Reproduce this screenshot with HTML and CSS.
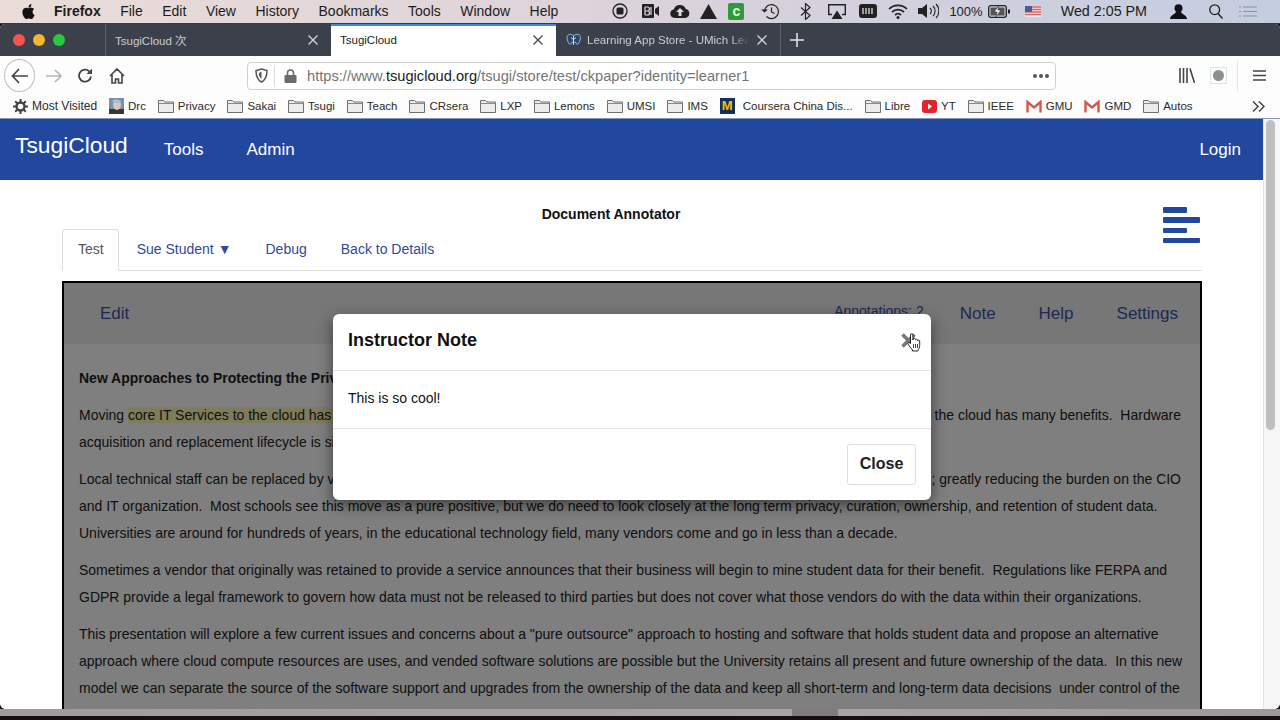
FILE: index.html
```html
<!DOCTYPE html>
<html lang="en">
<head>
<meta charset="utf-8">
<title>TsugiCloud</title>
<link rel="stylesheet" href="styles.css">
</head>
<body>
<svg class="defs" width="0" height="0" aria-hidden="true">
  <symbol id="folder" viewBox="0 0 16 14">
    <path d="M.5 13.5V1.5h5l1.5 1.5h8.500v10.500z" fill="#ececec" stroke="#6f6f6f"/>
    <path d="M.5 4.500h15" stroke="#8a8a8a"/>
  </symbol>
  <symbol id="gmail" viewBox="0 0 16 13">
    <path d="M1.500 12.500V2l6.500 5.500L14.500 2v10.500" fill="none" stroke="#d4574a" stroke-width="2.400"/>
  </symbol>
  <symbol id="tabclose" viewBox="0 0 12 12">
    <path d="M1.500 1.500l9 9m0-9l-9 9" fill="none" stroke="currentColor" stroke-width="1.300"/>
  </symbol>
</svg>

<header class="menubar">
  <svg class="apple" width="15" height="17" viewBox="0 0 24 24"><path d="M12.152 6.896c-.948 0-2.415-1.078-3.96-1.04-2.04.027-3.91 1.183-4.961 3.014-2.117 3.675-.546 9.103 1.519 12.09 1.013 1.454 2.208 3.09 3.792 3.039 1.52-.065 2.09-.987 3.935-.987 1.831 0 2.35.987 3.96.948 1.637-.026 2.676-1.48 3.676-2.948 1.156-1.688 1.636-3.325 1.662-3.415-.039-.013-3.182-1.221-3.22-4.857-.026-3.04 2.48-4.494 2.597-4.559-1.429-2.09-3.623-2.324-4.39-2.376-2-.156-3.675 1.09-4.61 1.09zM15.53 3.83c.843-1.012 1.4-2.427 1.245-3.83-1.207.052-2.662.805-3.532 1.818-.78.896-1.454 2.338-1.273 3.714 1.338.104 2.715-.688 3.559-1.701"/></svg>
  <nav class="menus">
    <span class="menu-app">Firefox</span>
    <span>File</span><span>Edit</span><span>View</span><span>History</span><span>Bookmarks</span><span>Tools</span><span>Window</span><span>Help</span>
  </nav>
  <div class="status">
    <svg class="st st-rec" width="16" height="16" viewBox="0 0 16 16"><circle cx="8" cy="8" r="7" fill="none" stroke="#222" stroke-width="1.300"/><rect x="4.500" y="4.500" width="7" height="7" rx="1.500" fill="#222"/></svg>
    <svg class="st st-bi" width="17" height="14" viewBox="0 0 17 14"><rect width="12" height="14" rx="1" fill="#222"/><path d="M3 3v8M3 3h2.500a2 2 0 0 1 0 4H3m2.500 0a2 2 0 0 1 0 4H3M9 3v8" fill="none" stroke="#ddd" stroke-width="1.200"/><path d="M13 5l4-3v10l-4-3z" fill="#222"/></svg>
    <svg class="st st-cloud" width="20" height="14" viewBox="0 0 20 14"><path d="M4.500 14a4.300 4.300 0 0 1-.8-8.500A6.400 6.400 0 0 1 15.800 5 4.600 4.600 0 0 1 15.500 14z" fill="#222"/><path d="M10 4l4 4h-2.500v4h-3V8H6z" fill="#e0d8e0"/></svg>
    <svg class="st st-tri" width="17" height="15" viewBox="0 0 17 15"><path d="M8.500 0L17 15H0z" fill="#222"/></svg>
    <span class="st st-c">c</span>
    <svg class="st st-clock" width="19" height="17" viewBox="0 0 19 17"><path d="M3.500 8.500a7 7 0 1 1 2 5" fill="none" stroke="#222" stroke-width="1.200"/><path d="M0 6.500l3.500 3 3.500-3z" fill="#222"/><path d="M10.500 4.500v4.500l3 1.500" fill="none" stroke="#222" stroke-width="1.200"/></svg>
    <svg class="st st-bt" width="11" height="17" viewBox="0 0 11 17"><path d="M1 4.500l9 8-4.500 4V.5l4.500 4-9 8" fill="none" stroke="#222" stroke-width="1.200"/></svg>
    <svg class="st st-air" width="18" height="15" viewBox="0 0 18 15"><path d="M4 10.500H.7V.7h16.600v9.800H14" fill="none" stroke="#222" stroke-width="1.400"/><path d="M9 6.500l5.500 8.500h-11z" fill="#222"/></svg>
    <svg class="st st-mem" width="18" height="14" viewBox="0 0 18 14"><rect width="18" height="14" rx="3" fill="#222"/><path d="M4 4v6M7 4v6M10 4v6M13 4v6" stroke="#ddd" stroke-width="1.300"/></svg>
    <svg class="st st-wifi" width="20" height="15" viewBox="0 0 20 15"><path d="M1 5a13 13 0 0 1 18 0M4 8a9 9 0 0 1 12 0M7 11a4.500 4.500 0 0 1 6 0" fill="none" stroke="#222" stroke-width="1.700"/><circle cx="10" cy="13.500" r="1.500" fill="#222"/></svg>
    <svg class="st st-vol" width="21" height="16" viewBox="0 0 21 16"><path d="M0 5h4l5-4v14l-5-4H0z" fill="#222"/><path d="M12 5a4 4 0 0 1 0 6M15 3a7 7 0 0 1 0 10M18 1a10 10 0 0 1 0 14" fill="none" stroke="#222" stroke-width="1.100"/></svg>
    <span class="st-pct">100%</span>
    <svg class="st st-batt" width="22" height="13" viewBox="0 0 22 13"><rect x=".7" y=".7" width="17.600" height="11.600" rx="2" fill="none" stroke="#222" stroke-width="1.300"/><rect x="2.500" y="2.500" width="14" height="8" fill="#555"/><path d="M20 4.500h2v4h-2z" fill="#222"/><path d="M10.500 1L6 7h3l-1 5 5-7h-3z" fill="#eee" stroke="#222" stroke-width=".5"/></svg>
    <svg class="st st-flag" width="16" height="11" viewBox="0 0 16 11"><rect width="16" height="11" fill="#e8e8ee"/><path d="M0 1h16M0 3.500h16M0 6h16M0 8.500h16" stroke="#d96a6a" stroke-width="1.300"/><rect width="7" height="6" fill="#4a5a9a"/></svg>
    <span class="st-clocktext">Wed 2:05 PM</span>
    <svg class="st st-user" width="17" height="15" viewBox="0 0 17 15"><circle cx="8.500" cy="4.200" r="4" fill="#111"/><path d="M6 7.500c0 2.500-6 3.500-6 7.500h17c0-4-6-5-6-7.500z" fill="#111"/></svg>
    <svg class="st st-search" width="14" height="15" viewBox="0 0 14 15"><circle cx="5.700" cy="5.700" r="4.900" fill="none" stroke="#222" stroke-width="1.300"/><path d="M9 9.500l4.500 5" stroke="#222" stroke-width="1.500"/></svg>
    <svg class="st st-list" width="18" height="11" viewBox="0 0 18 11"><path d="M0 1h2M4 1h14M0 5.500h2M4 5.500h14M0 10h2M4 10h14" stroke="#8d8f98" stroke-width="1.200"/></svg>
  </div>
</header>

<div class="window">
  <div class="tabstrip">
    <div class="traffic"><i class="dot dot-r"></i><i class="dot dot-y"></i><i class="dot dot-g"></i></div>
    <div class="tab">
      <span class="tab-title">TsugiCloud 次</span>
      <svg class="tab-x" width="12" height="12"><use href="#tabclose"/></svg>
    </div>
    <div class="tab tab-active">
      <span class="tab-title">TsugiCloud</span>
      <svg class="tab-x" width="12" height="12"><use href="#tabclose"/></svg>
    </div>
    <div class="tab tab-third">
      <svg class="tab-icon" width="15" height="15" viewBox="0 0 15 15"><path d="M7.500 2.500C5 .5 1 1 1 4.500c0 2 1 5 2.500 6.500 1 1 2-.5 2.500-2 1 .5 2.500.5 3.500 0 .5 1.500 1.500 3 2.500 2 1.500-1.500 2.500-4.500 2.500-6.500 0-3.500-4-4-6.500-2z" fill="#27486e" stroke="#9db8d8"/><path d="M7.500 3v9M5 4.500l2.500 2 2.500-2" fill="none" stroke="#dfe8f2" stroke-width=".9"/></svg>
      <span class="tab-title tab-fade">Learning App Store - UMich Lea</span>
      <svg class="tab-x" width="12" height="12"><use href="#tabclose"/></svg>
    </div>
    <svg class="newtab" width="14" height="14" viewBox="0 0 14 14"><path d="M7 0v14M0 7h14" stroke="#e4e6ea" stroke-width="1.500"/></svg>
  </div>

  <div class="toolbar">
    <span class="backbtn">
      <svg width="18" height="16" viewBox="0 0 18 16"><path d="M8 1L1.500 8 8 15M2 8h15" fill="none" stroke="#444" stroke-width="1.700"/></svg>
    </span>
    <svg class="tb-fwd" width="17" height="14" viewBox="0 0 17 14"><path d="M10 1l6 6-6 6M16 7H1" fill="none" stroke="#b5b5b8" stroke-width="1.600"/></svg>
    <svg class="tb-reload" width="16" height="15" viewBox="0 0 16 15"><path d="M14 8.500a6 6 0 1 1-1.800-5.200" fill="none" stroke="#444" stroke-width="1.800"/><path d="M15 .5v5.500H9.500z" fill="#444"/></svg>
    <svg class="tb-home" width="16" height="16" viewBox="0 0 16 16"><path d="M1 8l7-7 7 7M3 6.500V15h3.500v-4h3v4H13V6.500" fill="none" stroke="#444" stroke-width="1.600"/></svg>
    <div class="urlbar">
      <svg class="url-shield" width="13" height="15" viewBox="0 0 13 15"><path d="M6.500 1L12 2.500c0 6-1.500 9.500-5.500 11.500C2.500 12 1 8.500 1 2.500z" fill="none" stroke="#555" stroke-width="1.500"/><path d="M6.500 3.500v7.500C4.500 9.500 4 8 3.800 5z" fill="#555"/></svg>
      <i class="url-sep"></i>
      <svg class="url-lock" width="13" height="14" viewBox="0 0 13 14"><path d="M3.500 6V4a3 3 0 0 1 6 0v2" fill="none" stroke="#6b6b6b" stroke-width="1.600"/><rect x=".5" y="6" width="12" height="8" rx="1.300" fill="#6b6b6b"/></svg>
      <span class="url-text">https://www.<b>tsugicloud.org</b>/tsugi/store/test/ckpaper?identity=learner1</span>
      <span class="url-more"><i></i><i></i><i></i></span>
    </div>
    <svg class="tb-lib" width="16" height="15" viewBox="0 0 16 15"><path d="M1 0v15M4.500 0v15M8 0v15M11 .5l4.500 14.500" fill="none" stroke="#444" stroke-width="1.600"/></svg>
    <span class="tb-ext"><i></i></span>
    <i class="tb-sep"></i>
    <svg class="tb-menu" width="13" height="11" viewBox="0 0 13 11"><path d="M0 1h13M0 5.500h13M0 10h13" stroke="#444" stroke-width="1.600"/></svg>
  </div>

  <div class="bookmarks">
    <span class="bm bm-first"><svg width="15" height="15" viewBox="0 0 15 15"><circle cx="7.500" cy="7.500" r="4" fill="none" stroke="#444" stroke-width="2.400"/><path d="M7.500 0v3M7.500 12v3M0 7.500h3M12 7.500h3M2.200 2.200l2 2M10.800 10.800l2 2M12.800 2.200l-2 2M4.200 10.800l-2 2" stroke="#444" stroke-width="2"/></svg>Most Visited</span>
    <span class="bm"><svg width="15" height="16" viewBox="0 0 15 16"><rect width="15" height="16" fill="#7c8fa8"/><rect y="11" width="15" height="5" fill="#3a3434"/><ellipse cx="8" cy="7" rx="4" ry="5" fill="#d7c7b8"/><path d="M3 3l4-2 5 2-2 2H5z" fill="#a9bfd6"/></svg>Drc</span>
    <span class="bm"><svg width="16" height="14"><use href="#folder"/></svg>Privacy</span>
    <span class="bm"><svg width="16" height="14"><use href="#folder"/></svg>Sakai</span>
    <span class="bm"><svg width="16" height="14"><use href="#folder"/></svg>Tsugi</span>
    <span class="bm"><svg width="16" height="14"><use href="#folder"/></svg>Teach</span>
    <span class="bm"><svg width="16" height="14"><use href="#folder"/></svg>CRsera</span>
    <span class="bm"><svg width="16" height="14"><use href="#folder"/></svg>LXP</span>
    <span class="bm"><svg width="16" height="14"><use href="#folder"/></svg>Lemons</span>
    <span class="bm"><svg width="16" height="14"><use href="#folder"/></svg>UMSI</span>
    <span class="bm"><svg width="16" height="14"><use href="#folder"/></svg>IMS</span>
    <span class="bm bm-wide"><span class="um-logo">M</span>Coursera China Dis...</span>
    <span class="bm"><svg width="16" height="14"><use href="#folder"/></svg>Libre</span>
    <span class="bm"><svg width="15" height="13" viewBox="0 0 15 13"><rect width="15" height="13" rx="3" fill="#e8202a"/><path d="M6 3.500l4 3-4 3z" fill="#fff"/></svg>YT</span>
    <span class="bm"><svg width="16" height="14"><use href="#folder"/></svg>IEEE</span>
    <span class="bm"><svg width="16" height="13"><use href="#gmail"/></svg>GMU</span>
    <span class="bm"><svg width="16" height="13"><use href="#gmail"/></svg>GMD</span>
    <span class="bm"><svg width="16" height="14"><use href="#folder"/></svg>Autos</span>
    <svg class="bm-more" width="13" height="11" viewBox="0 0 13 11"><path d="M1 .5l5 5-5 5M7 .5l5 5-5 5" fill="none" stroke="#444" stroke-width="1.500"/></svg>
  </div>

  <div class="viewport">
    <main class="page">
      <nav class="navbar">
        <a class="brand">TsugiCloud</a>
        <a class="nav-link">Tools</a>
        <a class="nav-link">Admin</a>
        <a class="nav-link nav-login">Login</a>
      </nav>
      <div class="container">
        <div class="title-row">
          <div class="doc-title">Document Annotator</div>
          <div class="hamburger"><i class="bar-s"></i><i class="bar-l"></i><i class="bar-s"></i><i class="bar-l"></i></div>
        </div>
        <ul class="tabs">
          <li class="tab-on">Test</li>
          <li>Sue Student ▼</li>
          <li>Debug</li>
          <li>Back to Details</li>
        </ul>
        <section class="frame">
          <div class="frame-bar">
            <a class="fb-link">Edit</a>
            <span class="fb-count">Annotations: 2</span>
            <a class="fb-link fb-note">Note</a>
            <a class="fb-link">Help</a>
            <a class="fb-link">Settings</a>
          </div>
          <article class="doc">
            <p class="doc-head">New Approaches to Protecting the Privacy</p>
            <p>
              <span class="line line-split"><span>Moving <mark>core IT Services to the cloud has many</mark></span><span>the cloud has many benefits.  Hardware</span></span>
              <span class="line">acquisition and replacement lifecycle is simplified</span>
            </p>
            <p>
              <span class="line line-split"><span>Local technical staff can be replaced by vendors</span><span>; greatly reducing the burden on the CIO</span></span>
              <span class="line">and IT organization.  Most schools see this move as a pure positive, but we do need to look closely at the long term privacy, curation, ownership, and retention of student data.</span>
              <span class="line">Universities are around for hundreds of years, in the educational technology field, many vendors come and go in less than a decade.</span>
            </p>
            <p>
              <span class="line">Sometimes a vendor that originally was retained to provide a service announces that their business will begin to mine student data for their benefit.  Regulations like FERPA and</span>
              <span class="line">GDPR provide a legal framework to govern how data must not be released to third parties but does not cover what those vendors do with the data within their organizations.</span>
            </p>
            <p>
              <span class="line">This presentation will explore a few current issues and concerns about a "pure outsource" approach to hosting and software that holds student data and propose an alternative</span>
              <span class="line">approach where cloud compute resources are uses, and vended software solutions are possible but the University retains all present and future ownership of the data.  In this new</span>
              <span class="line">model we can separate the source of the software support and upgrades from the ownership of the data and keep all short-term and long-term data decisions  under control of the</span>
            </p>
          </article>
          <div class="backdrop"></div>
          <div class="modal">
            <div class="modal-head">
              <h2>Instructor Note</h2>
              <svg class="modal-x" width="15" height="15" viewBox="0 0 15 15"><path d="M1.500 1.500l12 12m0-12l-12 12" stroke="#777" stroke-width="3.600"/></svg>
              <svg class="cursor" width="14" height="19" viewBox="0 0 14 19"><path d="M3.500 10.500V2a1.200 1.200 0 0 1 2.400 0v5l.3-1a1.200 1.200 0 0 1 2.200.2l.2.600a1.100 1.100 0 0 1 2 .3l.2.500a1 1 0 0 1 1.900.4v4.500c0 2-1 3.500-1.800 4.700v.8H5.500v-1C4 15.500 2.500 13 1 11.200c-.9-1.200.9-2.400 2.500-.7z" fill="#fff" stroke="#111" stroke-width=".9"/><path d="M6.500 11v4M8.500 11v4M10.500 11v4" stroke="#111" stroke-width=".8"/></svg>
            </div>
            <div class="modal-body">This is so cool!</div>
            <div class="modal-foot"><button class="btn-close">Close</button></div>
          </div>
        </section>
      </div>
    </main>
    <aside class="scrollbar"><i class="thumb"></i></aside>
  </div>
</div>
<div class="dock-strip"></div>
</body>
</html>
```

FILE: styles.css
```css
* { box-sizing: border-box; }
html, body { margin: 0; height: 720px; overflow: hidden; }
body {
  background: #17100f;
  font-family: "Liberation Sans", "Noto Sans CJK SC", sans-serif;
  color: #222;
}
i { display: block; }
.defs { position: absolute; }

/* macOS menu bar */
.menubar {
  height: 24px;
  display: flex;
  align-items: center;
  padding-bottom: 1px;
  background: linear-gradient(90deg, #eadcd7 0%, #ddd3da 45%, #c4cde0 100%);
  border-bottom: 1px solid #3a3a3e;
  font-size: 14px;
  color: #1c1c1c;
}
.apple { margin-left: 21px; fill: #111; }
.menus { display: flex; gap: 19.500px; margin-left: 18px; }
.menu-app { font-weight: bold; }
.status { display: flex; align-items: center; margin-left: auto; padding-right: 23px; }
.st { display: block; flex: none; }
.st-bi { margin-left: 14px; }
.st-cloud { margin-left: 11px; }
.st-tri { margin-left: 10px; }
.st-c {
  margin-left: 11px; width: 16px; height: 17px; border-radius: 2px;
  background: #2f9a3c; color: #e8f3d8; font-size: 14px; font-weight: bold;
  text-align: center; line-height: 17px;
}
.st-clock { margin-left: 17px; }
.st-bt { margin-left: 20px; }
.st-air { margin-left: 17px; }
.st-mem { margin-left: 13px; }
.st-wifi { margin-left: 11px; }
.st-vol { margin-left: 10px; }
.st-pct { margin-left: 10px; font-size: 13px; }
.st-batt { margin-left: 5px; }
.st-flag { margin-left: 15px; }
.st-clocktext { margin-left: 20px; font-size: 14.300px; }
.st-user { margin-left: 23px; }
.st-search { margin-left: 22px; }
.st-list { margin-left: 16px; }

/* browser window */
.window {
  height: 685px;
  display: flex;
  flex-direction: column;
  overflow: hidden;
  border-radius: 5px 5px 6px 6px;
  position: relative;
  background: #fff;
}
.tabstrip {
  height: 32px;
  flex: none;
  display: flex;
  align-items: stretch;
  background: #3b404b;
  color: #c9cdd3;
  font-size: 11.500px;
}
.traffic { width: 106px; display: flex; align-items: center; gap: 8px; padding-left: 13px; border-right: 1px solid #5a5f69; }
.dot { width: 12px; height: 12px; border-radius: 50%; }
.dot-r { background: #f5544d; }
.dot-y { background: #f5b52e; }
.dot-g { background: #28c840; }
.tab { width: 225px; display: flex; align-items: center; padding: 0 12px 0 9px; }
.tab-title { flex: 1; min-width: 0; white-space: nowrap; overflow: hidden; }
.tab-x { flex: none; margin-left: 6px; color: #d3d6da; }
.tab-active { background: #fff; color: #222; border-top: 2px solid #3b8ad9; padding-bottom: 2px; }
.tab-active .tab-x { color: #444; }
.tab-third { border-right: 1px solid #5a5f69; padding-left: 10px; }
.tab-icon { flex: none; margin-right: 6px; }
.tab-fade { -webkit-mask-image: linear-gradient(90deg, #000 88%, transparent); mask-image: linear-gradient(90deg, #000 88%, transparent); }
.newtab { align-self: center; margin-left: 9px; }

.toolbar {
  height: 39px;
  flex: none;
  display: flex;
  align-items: center;
  background: #fdfdfd;
}
.backbtn {
  width: 31px; height: 33px; margin-left: 4px; border-radius: 50%;
  border: 1px solid #bdbdbd; background: #fff;
  display: flex; align-items: center; justify-content: center;
}
.tb-fwd { margin-left: 10px; }
.tb-reload { margin-left: 15px; }
.tb-home { margin-left: 16px; }
.urlbar {
  width: 809px; height: 28px; margin-left: 122px;
  border: 1px solid #cfcfcf; border-radius: 4px; background: #fff;
  display: flex; align-items: center; font-size: 14.650px; color: #757575;
}
.url-shield { margin-left: 7px; }
.url-sep { width: 1px; height: 22px; background: #dedede; margin-left: 6px; }
.url-lock { margin-left: 9px; }
.url-text { margin-left: 10px; white-space: nowrap; flex: 1; }
.url-text b { font-weight: normal; color: #1a1a1a; }
.url-more { display: flex; gap: 2px; margin-right: 6px; }
.url-more i { width: 4px; height: 4px; border-radius: 50%; background: #555; }
.tb-lib { margin-left: 123px; }
.tb-ext { width: 17px; height: 17px; margin-left: 15px; border: 1px solid #d3e8e3; display: flex; align-items: center; justify-content: center; }
.tb-ext i { width: 11px; height: 11px; border-radius: 50%; background: #8f8f8f; }
.tb-sep { width: 1px; height: 30px; background: #e6e6e6; margin-left: 10px; }
.tb-menu { margin-left: 15px; }

.bookmarks {
  height: 24px;
  flex: none;
  display: flex;
  align-items: center;
  gap: 11.900px;
  padding: 0 0 1px 13px;
  background: #fdfdfd;
  font-size: 11.500px;
  color: #2a2a2a;
  border-bottom: 1px solid #8796b5;
}
.bm { display: flex; align-items: center; gap: 4px; white-space: nowrap; flex: none; }
.bm svg { flex: none; display: block; }
.bm-first { font-size: 12px; }
.bm-wide { gap: 8px; }
.um-logo {
  width: 15px; height: 16px; background: #14305e; color: #f3c200;
  font-size: 13px; font-weight: bold; text-align: center; line-height: 16px;
}
.bm-more { margin-left: auto; margin-right: 15px; }

/* page */
.viewport { flex: 1; min-height: 0; display: flex; }
.page { width: 1263px; flex: none; overflow: hidden; background: #fff; }
.scrollbar { flex: 1; background: #f6f6f6; border-left: 1px solid #e4e4e4; padding: 1px 5px 0 2px; }
.thumb { height: 310px; border-radius: 5px; background: #bfbfbf; }

.navbar {
  height: 61px;
  background: #22479f;
  display: flex;
  align-items: center;
  padding: 0 22px 0 15px;
  color: #fff;
}
.brand { font-size: 22.800px; margin-right: 36px; padding-bottom: 9px; }
.nav-link { font-size: 17px; margin-right: 43px; }
.nav-login { margin-left: auto; margin-right: 0; }

.container { margin: 0 61px 0 62px; width: 1140px; }
.title-row { height: 49px; display: flex; align-items: flex-start; }
.doc-title { flex: 1; text-align: center; font-size: 14px; font-weight: bold; line-height: 20px; padding-top: 24px; color: #111; }
.hamburger { width: 42px; margin-top: 27px; padding-left: 3px; display: flex; flex-direction: column; gap: 4.800px; }
.hamburger i { height: 5.500px; border-radius: 1px; background: #22479f; }
.bar-s { width: 24px; }
.bar-l { width: 36.500px; }

.tabs {
  list-style: none; margin: 0; padding: 0;
  height: 42px; display: flex; gap: 2px;
  border-bottom: 1px solid #ddd;
  font-size: 14px; line-height: 20px; color: #2f4a9a;
}
.tabs li { padding: 9px 15px 11px; border: 1px solid transparent; height: 42px; white-space: nowrap; }
.tabs .tab-on { padding-right: 14px; border-color: #ddd; border-bottom-color: #fff; border-radius: 4px 4px 0 0; color: #555; background: #fff; }

.frame {
  position: relative;
  margin-top: 10px;
  height: 520px;
  border: 2px solid #000;
  background: #fff;
  overflow: hidden;
  font-size: 13.990px;
}
.frame-bar {
  height: 61px;
  background: #eee;
  display: flex;
  align-items: center;
  gap: 43px;
  padding: 0 22px 0 36px;
  color: #3f52a4;
}
.fb-link { font-size: 17px; }
.fb-count { margin-left: auto; margin-bottom: 6px; margin-right: -7px; font-size: 14px; }
.doc { padding: 21px 15px 0; color: #222; }
.doc p { margin: 0 0 10px; line-height: 27px; }
.doc-head { font-weight: bold; }
.line { display: block; white-space: pre; }
.line-split { display: flex; justify-content: space-between; padding-right: 4px; }
mark { background: #fff9b8; color: inherit; }
.backdrop { position: absolute; inset: 0; background: rgba(0, 0, 0, 0.5); }
.modal {
  position: absolute;
  left: 269px;
  top: 31px;
  width: 598px;
  height: 186px;
  background: #fff;
  border-radius: 6px;
  box-shadow: 0 5px 15px rgba(0, 0, 0, 0.5);
  color: #111;
}
.modal-head {
  position: relative;
  height: 57px;
  padding: 0 15px 3px;
  display: flex;
  align-items: center;
  justify-content: space-between;
  border-bottom: 1px solid #e5e5e5;
}
.modal-head h2 { margin: 0; font-size: 18px; font-weight: bold; }
.cursor { position: absolute; right: 10px; top: 19px; }
.modal-body { height: 58px; padding: 0 15px 3px; display: flex; align-items: center; border-bottom: 1px solid #e5e5e5; }
.modal-foot { display: flex; justify-content: flex-end; padding: 15px; }
.btn-close {
  width: 69px; height: 41px; padding: 0 0 2px;
  background: #fff; border: 1px solid #ddd; border-radius: 3px;
  font: bold 16px "Liberation Sans", sans-serif; color: #222;
}

.dock-strip {
  height: 7px;
  background: linear-gradient(90deg, #9d9d9d 0, #a5a5a5 792px, #7c7c7c 792px, #7c7c7c 838px, #a5a5a5 838px, #9a9a9a 100%);
}
```
